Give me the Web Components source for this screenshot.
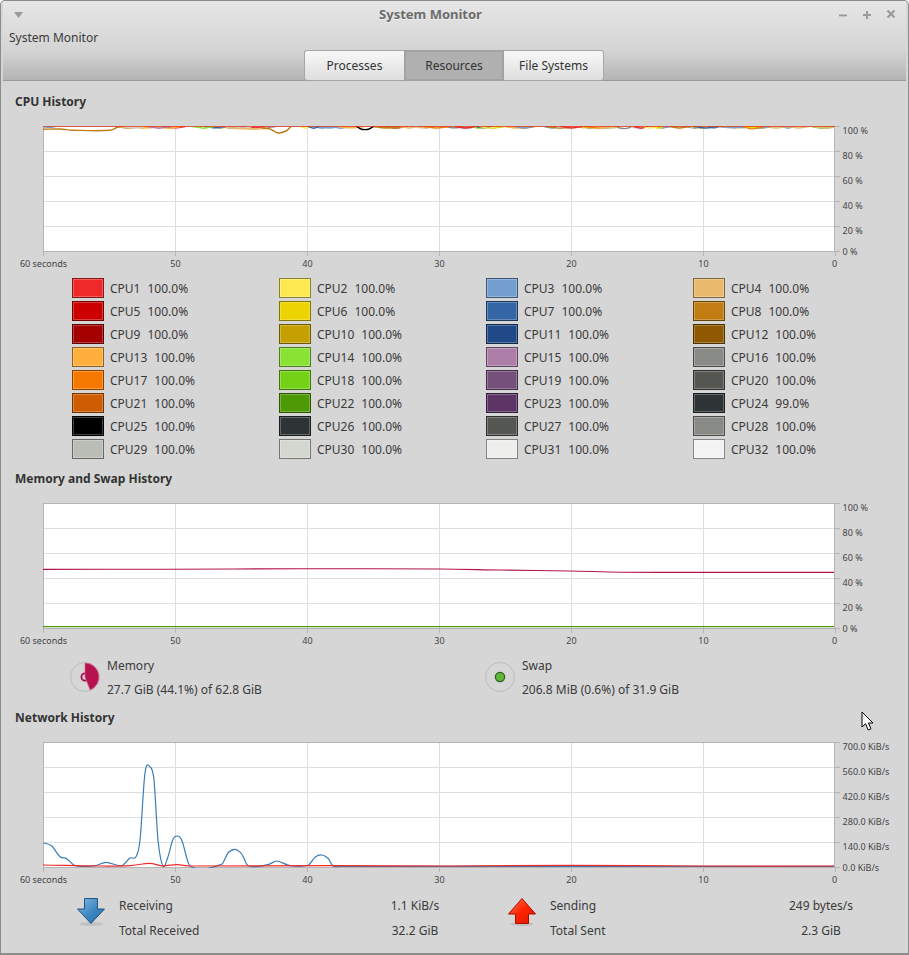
<!DOCTYPE html>
<html>
<head>
<meta charset="utf-8">
<title>System Monitor</title>
<style>
  html, body { margin: 0; padding: 0; background: #fff; }
  body { font: 12px "Noto Sans", sans-serif; color: #3a3a3a; }
</style>
</head>
<body>
<system-window>
  <window-header slot="header" title="System Monitor" menu="System Monitor">
    <tab-button>Processes</tab-button>
    <tab-button active>Resources</tab-button>
    <tab-button>File Systems</tab-button>
  </window-header>

  <history-section>
    <span slot="title">CPU History</span>
    <history-graph labels="100 %,80 %,60 %,40 %,20 %,0 %" series="cpu"></history-graph>
    <cpu-legend slot="legend"></cpu-legend>
  </history-section>

  <history-section>
    <span slot="title">Memory and Swap History</span>
    <history-graph labels="100 %,80 %,60 %,40 %,20 %,0 %" series="memory"></history-graph>
    <div slot="legend" style="display:grid;grid-template-columns:415px 1fr;padding:8px 0 0 67px">
      <usage-item kind="memory" label="Memory" detail="27.7 GiB (44.1%) of 62.8 GiB"></usage-item>
      <usage-item kind="swap" label="Swap" detail="206.8 MiB (0.6%) of 31.9 GiB"></usage-item>
    </div>
  </history-section>

  <history-section>
    <span slot="title">Network History</span>
    <history-graph labels="700.0 KiB/s,560.0 KiB/s,420.0 KiB/s,280.0 KiB/s,140.0 KiB/s,0.0 KiB/s" series="network"></history-graph>
    <div slot="legend" style="display:grid;grid-template-columns:431px 1fr;padding:9px 0 0 74px">
      <network-item kind="down" label-width="256" first="Receiving" first-value="1.1 KiB/s" second="Total Received" second-value="32.2 GiB"></network-item>
      <network-item kind="up" label-width="231" first="Sending" first-value="249 bytes/s" second="Total Sent" second-value="2.3 GiB"></network-item>
    </div>
  </history-section>

  <mouse-cursor slot="overlay"></mouse-cursor>
</system-window>

<script>
// tango colours, in the order the legend lists the cpus
const CPU_COLORS = [
  '#ef2929', '#fce94f', '#729fcf', '#e9b96e',
  '#cc0000', '#edd400', '#3465a4', '#c17d11',
  '#a40000', '#c4a000', '#204a87', '#8f5902',
  '#ffaf3c', '#8ae234', '#ad7fa8', '#888a85',
  '#f57900', '#73d216', '#75507b', '#555753',
  '#ce5c00', '#4e9a06', '#5c3566', '#2e3436',
  '#000000', '#2e3436', '#555753', '#888a85',
  '#babdb6', '#d3d7cf', '#eeeeec', '#f3f3f3'
];

// the dark ones hardly show in the band at the top of the cpu graph
const BAND_COLORS = ['#fce94f', '#729fcf', '#e9b96e', '#edd400', '#c17d11', '#ffaf3c', '#8ae234', '#ad7fa8', '#888a85', '#babdb6', '#d3d7cf', '#f57900', '#ef2929', '#e9b96e', '#729fcf', '#3465a4'];

// hermite through the points, x always grows so a long flat stretch can't overshoot
function smoothPath(pts) {
  const slope = i => {
    const a = pts[i - 1] || pts[i];
    const b = pts[i + 1] || pts[i];
    return (b[1] - a[1]) / (b[0] - a[0]);
  };
  let d = `M${pts[0][0]} ${pts[0][1]}`;
  for (let i = 0; i < pts.length - 1; i++) {
    const p1 = pts[i];
    const p2 = pts[i + 1];
    const h = (p2[0] - p1[0]) / 3;
    const c1y = p1[1] + slope(i) * h;
    const c2y = p2[1] - slope(i + 1) * h;
    d += `C${(p1[0] + h).toFixed(1)} ${c1y.toFixed(1)} ${(p2[0] - h).toFixed(1)} ${c2y.toFixed(1)} ${p2[0]} ${p2[1]}`;
  }
  return d;
}

function cpuSeries() {
  let seed = 11;
  const rnd = () => (seed = (seed * 1103515245 + 12345) % 2147483648) / 2147483648;
  const lines = [];
  // all cpus sit at the very top, only small humps of each colour show below the top line
  for (let n = 0; n < 90; n++) {
    const x = 118 + rnd() * 716;
    const half = 5 + rnd() * 9;
    const color = BAND_COLORS[Math.floor(rnd() * BAND_COLORS.length)];
    lines.push({ color, width: 1.5, points: [[x - half, 126.4], [x, 127.6 + rnd() * 0.6], [x + half, 126.4]] });
  }
  // the few cpus that were visibly below 100%
  lines.push({ color: '#729fcf', width: 1.2, points: [[43, 127], [50, 127.4], [56, 126.5]] });
  lines.push({ color: '#c17d11', width: 1.4, points: [[43, 129.2], [60, 129], [73, 130.2], [110, 130.3], [118, 127], [124, 126.3]] });
  lines.push({ color: '#e9b96e', width: 1.8, points: [[225, 126.5], [232, 128.2], [255, 129], [268, 128]] });
  lines.push({ color: '#c17d11', width: 1.4, points: [[262, 128], [270, 129], [278, 133], [286, 131], [291, 126.5]] });
  lines.push({ color: '#000000', width: 1.4, points: [[356, 126], [361, 129], [365, 129.6], [369, 129], [374, 126]] });
  lines.push({ color: '#888a85', width: 1.4, points: [[616, 126], [620, 128.2], [624, 128.6], [628, 128.2], [632, 126]] });
  lines.push({ color: '#edd400', width: 2, points: [[744, 126.5], [752, 127.6], [760, 126.5]] });
  lines.push({ color: '#f57900', width: 1.2, points: [[744, 127], [752, 129], [760, 127]] });
  lines.push({ color: '#e6351c', width: 0.9, points: [[43, 126.3], [834, 126.3]] });
  return lines;
}

const SERIES = {
  cpu: cpuSeries(),
  memory: [
    { color: '#b5124f', width: 1.1, points: [[43, 569.4], [170, 569.2], [300, 568.8], [440, 569], [500, 570], [570, 571], [620, 572.2], [700, 572.4], [834, 572.4]] },
    { color: '#4e9a06', width: 1.1, points: [[43, 626.6], [834, 626.6]] }
  ],
  network: [
    { color: '#3a7db5', width: 1.2, points: [[43.5, 842.7], [51.7, 846], [60, 856.7], [66.7, 858.7], [75, 865.7], [95, 865.7], [106, 862.3], [121.7, 865.7], [130, 858], [136, 856.7], [140, 840], [145, 773], [150, 766.7], [154, 780], [158, 840], [163, 866], [168, 856.7], [172.7, 840], [177, 836], [181.7, 840], [190, 866], [221.7, 864.3], [228, 853], [235, 849.3], [241.7, 854], [248, 865.7], [268, 864.7], [276.7, 861], [290, 865.7], [308, 865.3], [315, 857.3], [321.7, 855], [328, 858.3], [333, 866], [340, 866.4], [834, 866.4]] },
    { color: '#ef2929', width: 1.2, points: [[43, 865], [100, 866], [130, 865.6], [150, 863.4], [162, 865.8], [177, 864.6], [190, 866], [330, 865.6], [450, 866], [570, 865.4], [700, 866], [834, 866]] }
  ]
};

// plot tops in page coordinates, the svg of each graph starts 8px above its plot
const PLOT_TOP = { cpu: 126, memory: 503, network: 742 };

class systemWindow extends HTMLElement {
  constructor() {
    super();
    this.attachShadow({ mode: 'open' });
    this.shadowRoot.innerHTML = `
      <style>
        :host { display: block; position: relative; box-sizing: border-box; width: 909px; height: 955px; overflow: hidden;
          background: #d6d6d6; border: 1px solid #8c8c8c; border-bottom-width: 2px; border-radius: 5px 5px 0 0; padding: 0 2px; }
        .body { display: flex; flex-direction: column; gap: 10px; padding-top: 11px; }
      </style>
      <slot name="header"></slot>
      <div class="body"><slot></slot></div>
      <slot name="overlay"></slot>
    `;
  }
}
customElements.define('system-window', systemWindow);

class windowHeader extends HTMLElement {
  constructor() {
    super();
    this.attachShadow({ mode: 'open' });
    this.shadowRoot.innerHTML = `
      <style>
        :host { display: block; height: 80px; box-sizing: border-box; border-bottom: 1px solid #9a9a9a;
          background: linear-gradient(#e6e6e6 0, #d4d4d4 50px, #b4b4b4 79px); }
        .title-row { display: flex; align-items: center; height: 27px; }
        .menu-btn { width: 26px; display: flex; padding-left: 11px; box-sizing: border-box; }
        .title { flex: 1; text-align: center; font-weight: 700; font-size: 13px; line-height: 26px; height: 27px; color: #6b6b6b; text-shadow: 0 1px 0 rgba(255,255,255,.5); }
        .buttons { width: 74px; height: 14px; display: flex; gap: 10px; padding-left: 5px; box-sizing: border-box; }
        .buttons svg { display: block; flex: none; }
        .menubar { height: 22px; line-height: 19px; padding-left: 6px; color: #3a3a3a; }
        .tabs { display: flex; justify-content: center; height: 31px; margin-left: -1px; }
      </style>
      <div class="title-row">
        <div class="menu-btn"><svg width="9" height="6" viewBox="0 0 9 6"><path d="M0 0h9L4.5 6z" fill="#9a9a9a"/></svg></div>
        <div class="title">${this.getAttribute('title')}</div>
        <div class="buttons">
          <svg width="14" height="14" viewBox="0 0 14 14"><path d="M2 8h8" stroke="#fff" stroke-opacity=".6" stroke-width="2"/><path d="M2 7.5h8" stroke="#9a9a9a" stroke-width="2"/></svg>
          <svg width="14" height="14" viewBox="0 0 14 14"><path d="M2 7h8M6 3v8" stroke="#9a9a9a" stroke-width="2"/></svg>
          <svg width="14" height="14" viewBox="0 0 14 14"><path d="M2.5 2.5l7 7M9.5 2.5l-7 7" stroke="#9a9a9a" stroke-width="2.2"/></svg>
        </div>
      </div>
      <div class="menubar">${this.getAttribute('menu')}</div>
      <div class="tabs"><slot></slot></div>
    `;
  }
}
customElements.define('window-header', windowHeader);

class tabButton extends HTMLElement {
  constructor() {
    super();
    this.attachShadow({ mode: 'open' });
    this.shadowRoot.innerHTML = `
      <style>
        :host { display: flex; align-items: center; justify-content: center; box-sizing: border-box; width: 100px; height: 31px;
          border: 1px solid #a6a6a6; background: linear-gradient(#f8f8f8, #dedede); color: #333; }
        :host(:first-child) { border-radius: 3px 0 0 3px; border-right: 0; }
        :host(:last-child) { border-radius: 0 3px 3px 0; border-left: 0; }
        :host([active]) { background: #b0b0b0; border: 2px solid #a2a2a2; }
      </style>
      <slot></slot>
    `;
  }
}
customElements.define('tab-button', tabButton);

class historySection extends HTMLElement {
  constructor() {
    super();
    this.attachShadow({ mode: 'open' });
    this.shadowRoot.innerHTML = `
      <style>
        :host { display: block; }
        .title { height: 18px; line-height: 20px; margin: 0 0 8px 12px; font-weight: 700; color: #333; }
      </style>
      <div class="title"><slot name="title"></slot></div>
      <slot></slot>
      <slot name="legend"></slot>
    `;
  }
}
customElements.define('history-section', historySection);

class historyGraph extends HTMLElement {
  constructor() {
    super();
    this.attachShadow({ mode: 'open' });
    const name = this.getAttribute('series');
    const top = PLOT_TOP[name];
    const labels = this.getAttribute('labels').split(',');
    const times = ['60 seconds', '50', '40', '30', '20', '10', '0'];
    let grid = '';
    let text = '';
    labels.forEach((label, i) => {
      const y = top + i * 25 + 0.5;
      if (i < 5 && i > 0) grid += `<path d="M43 ${y}H834" stroke="#dedede"/>`;
      grid += `<path d="M834 ${y}H840" stroke="#b4b4b4"/>`;
      // the labels hang under their line, the last one is kept inside the plot height
      const base = i < 5 ? y + 7.5 : y + 3.5;
      text += `<text x="842.6" y="${base}">${label}</text>`;
    });
    times.forEach((label, i) => {
      const x = 43 + i * 132 + 0.5;
      if (i > 0 && i < 6) grid += `<path d="M${x} ${top}V${top + 125}" stroke="#dedede"/>`;
      grid += `<path d="M${x} ${top + 125}V${top + 130}" stroke="#b4b4b4"/>`;
      const tx = i === 6 ? x - 1 : x;
      text += `<text x="${tx}" y="${top + 141}" text-anchor="middle">${label}</text>`;
    });
    const lines = SERIES[name].map(s =>
      `<path d="${smoothPath(s.points)}" fill="none" stroke="${s.color}" stroke-width="${s.width}"/>`).join('');
    this.shadowRoot.innerHTML = `
      <style>
        :host { display: block; height: 154px; }
        svg { display: block; }
        text { font: 9px "Noto Sans", sans-serif; fill: #444; }
      </style>
      <svg width="905" height="154" viewBox="3 ${top - 8} 905 154">
        <defs><clipPath id="plot"><rect x="43" y="${top}" width="792" height="126"/></clipPath></defs>
        <rect x="43" y="${top}" width="791.5" height="125" fill="#fff"/>
        ${grid}
        <path d="M43.5 ${top}V${top + 125.5}H834.5V${top}" fill="none" stroke="#b4b4b4"/>
        <path d="M43 ${top + 0.5}H834" stroke="#b4b4b4"/>
        <g clip-path="url(#plot)">${lines}</g>
        ${text}
      </svg>
    `;
  }
}
customElements.define('history-graph', historyGraph);

class cpuLegend extends HTMLElement {
  constructor() {
    super();
    this.attachShadow({ mode: 'open' });
    const items = CPU_COLORS.map((color, i) => {
      const value = i === 23 ? '99.0%' : '100.0%';
      return `<div class="item"><span class="swatch" style="--c:${color}"></span><span>CPU${i + 1}</span><span class="value">${value}</span></div>`;
    }).join('');
    this.shadowRoot.innerHTML = `
      <style>
        :host { display: grid; grid-template-columns: repeat(4, 207px); row-gap: 3px; padding: 6px 0 0 69px; }
        .item { display: flex; align-items: center; height: 20px; }
        .swatch { width: 32px; height: 20px; box-sizing: border-box; margin-right: 6px;
          background: var(--c); border: 1px solid color-mix(in srgb, var(--c) 55%, #000);
          box-shadow: inset 0 0 0 1px color-mix(in srgb, var(--c) 75%, #fff); }
        .value { margin-left: 7px; }
      </style>
      ${items}
    `;
  }
}
customElements.define('cpu-legend', cpuLegend);

class usageItem extends HTMLElement {
  constructor() {
    super();
    this.attachShadow({ mode: 'open' });
    // the pie of gnome-system-monitor: a wedge from 12 o'clock and a ring at the centre
    const icon = this.getAttribute('kind') === 'memory'
      ? `<circle cx="15" cy="15" r="3.6" fill="#d6d6d6" stroke="#a01046" stroke-width="1.8"/>
         <path d="M15 1A14 14 0 0 1 20.1 28L15 15z" fill="#b5124f" stroke="#d4648c" stroke-width=".7"/>`
      : `<circle cx="15" cy="15" r="4.6" fill="#5cb83c" stroke="#2f5a1e" stroke-width="1.2"/>`;
    this.shadowRoot.innerHTML = `
      <style>
        :host { display: flex; gap: 7px; align-items: center; }
        svg { display: block; flex: none; position: relative; top: -1px; }
        .text { display: flex; flex-direction: column; gap: 7px; }
        .text span { display: block; height: 17px; line-height: 17px; }
      </style>
      <svg width="30" height="30" viewBox="0 0 30 30">
        <circle cx="15" cy="15" r="14.5" fill="none" stroke="#bcbcbc"/>
        ${icon}
      </svg>
      <div class="text"><span>${this.getAttribute('label')}</span><span>${this.getAttribute('detail')}</span></div>
    `;
  }
}
customElements.define('usage-item', usageItem);

class networkItem extends HTMLElement {
  constructor() {
    super();
    this.attachShadow({ mode: 'open' });
    const down = this.getAttribute('kind') === 'down';
    const arrow = down
      ? `<defs><linearGradient id="a" x1="0" y1="0" x2="1" y2="1"><stop offset="0" stop-color="#8dbbe0"/><stop offset=".55" stop-color="#3a86c0"/><stop offset="1" stop-color="#2a6ea8"/></linearGradient></defs>
         <path d="M7.5 .5h13v10.5h7L14 25.5.5 11h7z" fill="url(#a)" stroke="#1f5585"/>`
      : `<defs><linearGradient id="a" x1="0" y1="0" x2="1" y2="1"><stop offset="0" stop-color="#ff7a5a"/><stop offset=".5" stop-color="#ff2400"/><stop offset="1" stop-color="#e01400"/></linearGradient></defs>
         <path d="M14 .5L27.5 16H20.5v9.5h-13V16H.5z" fill="url(#a)" stroke="#a50f00"/>`;
    this.shadowRoot.innerHTML = `
      <style>
        :host { display: grid; grid-template-columns: 42px ${this.getAttribute('label-width')}px 80px; grid-template-rows: 17px 17px; row-gap: 8px; }
        svg { display: block; grid-row: 1 / 3; margin-top: 1px; }
        span { line-height: 17px; }
        .value { text-align: center; }
      </style>
      <svg width="30" height="32" viewBox="0 0 30 32">
        <ellipse cx="14" cy="26" rx="12" ry="2" fill="#000" opacity=".09"/>
        ${arrow}
      </svg>
      <span>${this.getAttribute('first')}</span><span class="value">${this.getAttribute('first-value')}</span>
      <span>${this.getAttribute('second')}</span><span class="value">${this.getAttribute('second-value')}</span>
    `;
  }
}
customElements.define('network-item', networkItem);

class mouseCursor extends HTMLElement {
  constructor() {
    super();
    this.attachShadow({ mode: 'open' });
    this.shadowRoot.innerHTML = `
      <style>:host { position: absolute; left: 860px; top: 710px; display: block; width: 14px; height: 22px; }</style>
      <svg width="14" height="22" viewBox="0 0 14 22"><path d="M1 1v15l3.6-3.2L7.2 19l2.8-1.2-2.6-5.8H12z" fill="#fff" stroke="#000"/></svg>
    `;
  }
}
customElements.define('mouse-cursor', mouseCursor);
</script>
</body>
</html>
